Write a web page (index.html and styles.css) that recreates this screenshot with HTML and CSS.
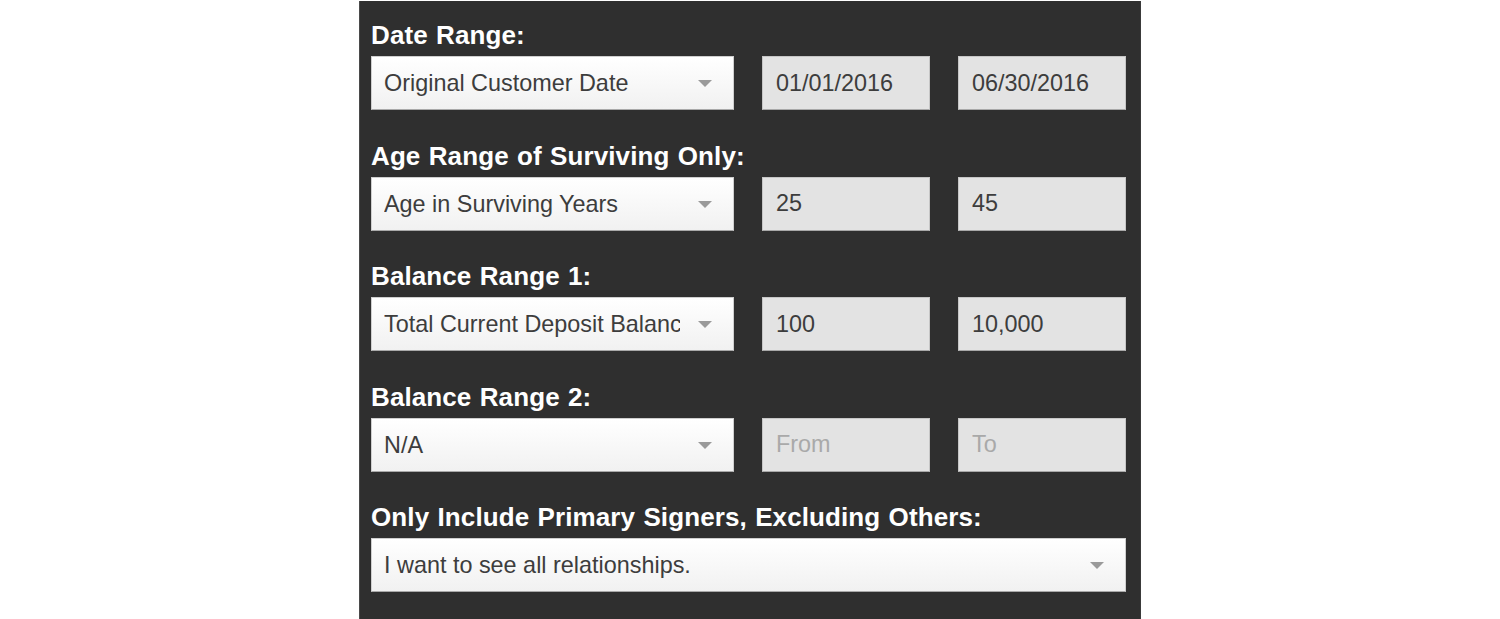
FILE: index.html
```html
<!DOCTYPE html>
<html lang="en">
<head>
    <meta charset="UTF-8">
    <meta name="viewport" content="width=device-width, initial-scale=1.0">
    <title>Report Filters</title>
    <link rel="stylesheet" href="styles.css">
</head>
<body>

    <div class="filter-panel">

        <div class="filter-group">
            <label class="filter-label">Date Range:</label>
            <div class="filter-row">
                <div class="select-wrap">
                    <select class="filter-select">
                        <option>Original Customer Date</option>
                    </select>
                </div>
                <input class="filter-input" type="text" value="01/01/2016">
                <input class="filter-input" type="text" value="06/30/2016">
            </div>
        </div>

        <div class="filter-group">
            <label class="filter-label">Age Range of Surviving Only:</label>
            <div class="filter-row">
                <div class="select-wrap">
                    <select class="filter-select">
                        <option>Age in Surviving Years</option>
                    </select>
                </div>
                <input class="filter-input" type="text" value="25">
                <input class="filter-input" type="text" value="45">
            </div>
        </div>

        <div class="filter-group">
            <label class="filter-label">Balance Range 1:</label>
            <div class="filter-row">
                <div class="select-wrap">
                    <select class="filter-select">
                        <option>Total Current Deposit Balance</option>
                    </select>
                </div>
                <input class="filter-input" type="text" value="100">
                <input class="filter-input" type="text" value="10,000">
            </div>
        </div>

        <div class="filter-group">
            <label class="filter-label">Balance Range 2:</label>
            <div class="filter-row">
                <div class="select-wrap">
                    <select class="filter-select">
                        <option>N/A</option>
                    </select>
                </div>
                <input class="filter-input" type="text" placeholder="From">
                <input class="filter-input" type="text" placeholder="To">
            </div>
        </div>

        <div class="filter-group">
            <label class="filter-label">Only Include Primary Signers, Excluding Others:</label>
            <div class="select-wrap">
                <select class="filter-select">
                    <option>I want to see all relationships.</option>
                </select>
            </div>
        </div>

    </div>

</body>
</html>
```

FILE: styles.css
```css
* {
    margin: 0;
    padding: 0;
    box-sizing: border-box;
    font-family: "Liberation Sans", Arial, Helvetica, sans-serif;
}

body {
    background-color: #ffffff;
    height: 100vh;
    overflow: hidden;
    display: flex;
    justify-content: center;
}

.filter-panel {
    width: 782px;
    height: calc(100vh - 1px);
    margin-top: 1px;
    padding: 19px 14px 0 11px;
    background-color: #2f2f2f;
    border-left: 1px solid #4a4a4a;
    border-right: 1px solid #3a3a3a;
}

.filter-group {
    margin-bottom: 30.6px;
}

.filter-label {
    display: block;
    height: 30px;
    line-height: 30px;
    margin-bottom: 6px;
    color: #ffffff;
    font-size: 26px;
    font-weight: bold;
    letter-spacing: 0.1px;
    word-spacing: 1px;
}

.filter-row {
    display: grid;
    grid-template-columns: 363px 168px 168px;
    column-gap: 28px;
}

.select-wrap {
    position: relative;
}

.select-wrap::after {
    content: "";
    position: absolute;
    right: 22px;
    top: 24px;
    border-left: 7px solid transparent;
    border-right: 7px solid transparent;
    border-top: 7px solid #9a9a9a;
    pointer-events: none;
}

.filter-select {
    appearance: none;
    -webkit-appearance: none;
    display: block;
    width: 100%;
    height: 54px;
    padding: 0 53px 0 12px;
    font-size: 23.4px;
    color: #3d3d3d;
    background: linear-gradient(#ffffff, #f1f1f1);
    border: 1px solid #cfcfcf;
    border-bottom-color: #a9a9a9;
    border-radius: 0;
    outline: none;
}

.filter-input {
    display: block;
    width: 168px;
    height: 54px;
    padding: 0 13px;
    font-size: 23.4px;
    color: #3d3d3d;
    background-color: #e3e3e3;
    border: 1px solid #c6c6c6;
    border-bottom-color: #a8a8a8;
    border-radius: 0;
    outline: none;
}

.filter-input::placeholder {
    color: #a9a9a9;
}
```
